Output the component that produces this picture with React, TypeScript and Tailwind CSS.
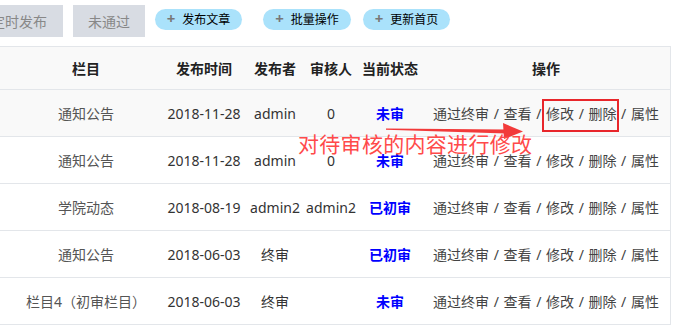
import React from 'react';

type Row = {
  column: string;
  date: string;
  publisher: string;
  reviewer: string;
  status: string;
  hover?: boolean;
};

const rows: Row[] = [
  { column: '通知公告', date: '2018-11-28', publisher: 'admin', reviewer: '0', status: '未审', hover: true },
  { column: '通知公告', date: '2018-11-28', publisher: 'admin', reviewer: '0', status: '未审' },
  { column: '学院动态', date: '2018-08-19', publisher: 'admin2', reviewer: 'admin2', status: '已初审' },
  { column: '通知公告', date: '2018-06-03', publisher: '终审', reviewer: '', status: '已初审' },
  { column: '栏目4（初审栏目）', date: '2018-06-03', publisher: '终审', reviewer: '', status: '未审' },
];

const grid = 'grid grid-cols-[172px_64px_78px_34px_84px_228px_11px]';
const cell = 'flex items-center justify-center whitespace-nowrap';

const PillButton: React.FC<{ label: string; className?: string }> = ({ label, className }) => (
  <button
    className={`h-[21px] rounded-full bg-[#aae2fb] flex items-center justify-center whitespace-nowrap text-[12px] text-black ${className ?? ''}`}
  >
    <span className="text-[#777] text-[15px] font-bold leading-none mr-[7px] -mt-[2px]">+</span>
    {label}
  </button>
);

const Actions = () => (
  <span className="text-[#444] [word-spacing:1px]">
    通过终审 / 查看 / 修改 / 删除 / 属性
  </span>
);

export default function App() {
  return (
    <div
      className="relative w-[677px] h-[328px] overflow-hidden bg-white text-[14px] text-[#333]"
      style={{ fontFamily: '"Noto Sans", "Noto Sans CJK SC", sans-serif' }}
    >
      {/* toolbar */}
      <div className="h-[46px] flex items-start">
        <button className="ml-[-25px] mt-[5px] h-[32px] px-[16px] bg-[#d8dce3] text-[#888] text-[14px] whitespace-nowrap">定时发布</button>
        <button className="ml-[10px] mt-[5px] h-[32px] w-[72px] bg-[#d8dce3] text-[#888] text-[14px] whitespace-nowrap">未通过</button>
        <PillButton label="发布文章" className="ml-[10px] mt-[9px] w-[87px]" />
        <PillButton label="批量操作" className="ml-[21px] mt-[9px] w-[88px]" />
        <PillButton label="更新首页" className="ml-[12px] mt-[9px] w-[87px]" />
      </div>

      {/* table */}
      <div className="w-[671px] border-t border-r border-[#e3e6ea]">
        <div className={`${grid} h-[43px] bg-[#f9f9f9] border-b border-[#e3e6ea] font-bold text-[#222]`}>
          <div className={cell}>栏目</div>
          <div className={cell}>发布时间</div>
          <div className={cell}>发布者</div>
          <div className={cell}>审核人</div>
          <div className={cell}>当前状态</div>
          <div className={cell}>操作</div>
          <div />
        </div>
        {rows.map((r, i) => (
          <div
            key={i}
            className={`${grid} h-[47px] border-b border-[#e3e6ea] ${r.hover ? 'bg-[#f9f9f9]' : 'bg-white'}`}
          >
            <div className={`${cell} text-[#555]`}>{r.column}</div>
            <div className={cell}>{r.date}</div>
            <div className={cell}>{r.publisher}</div>
            <div className={cell}>{r.reviewer}</div>
            <div className={`${cell} font-bold text-[#0000ff]`}>{r.status}</div>
            <div className={cell}>
              <Actions />
            </div>
            <div />
          </div>
        ))}
      </div>

      {/* annotation overlay */}
      <div className="absolute left-[542px] top-[99px] w-[77px] h-[33px] border-2 border-[#e8262b]" />
      <svg className="absolute left-0 top-0 pointer-events-none" width="677" height="328">
        <polygon points="386,128.6 506,129.5 506,133.5 386,129.8" fill="#f23a3a" />
        <polygon points="503,123 523,131.5 504,139" fill="#f23a3a" />
      </svg>
      <div
        className="absolute left-[298px] top-[128px] text-[21px] leading-[30px] tracking-[0.3px] text-[#ff4a4a] whitespace-nowrap"
        style={{ fontFamily: '"Noto Sans CJK SC", sans-serif' }}
      >
        对待审核的内容进行修改
      </div>
    </div>
  );
}
